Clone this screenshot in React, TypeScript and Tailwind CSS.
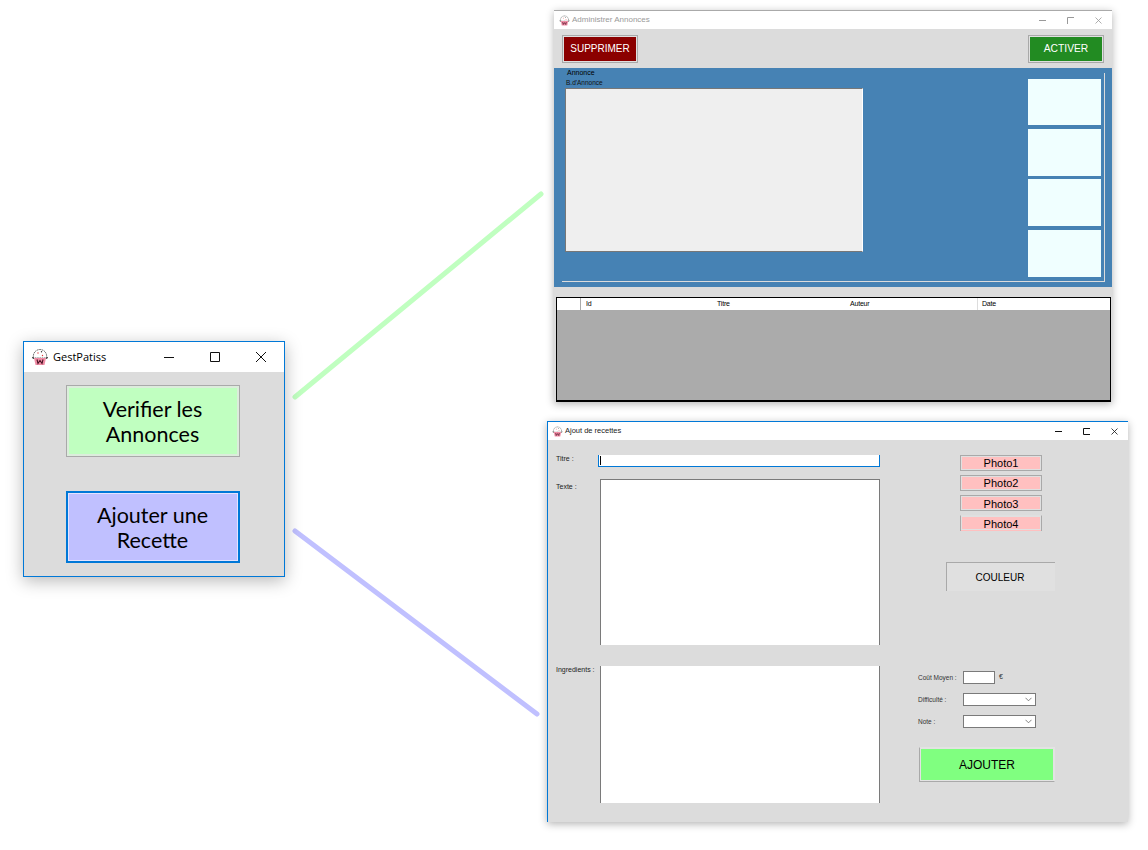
import type { ReactNode } from "react";

const SANS = "font-['Liberation_Sans',sans-serif]";

function Cupcake({ size }: { size: number }) {
  return (
    <svg width={size} height={size} viewBox="0 0 18 18" className="shrink-0">
      <path d="M2.5 10 C1.5 5 5 1.5 9 1.5 C13 1.5 16.5 5 15.5 10 Z" fill="#fff" stroke="#444" strokeWidth="0.8" strokeDasharray="1.6 0.7" />
      <path d="M1 9.5 L3 10.5 M17 9.5 L15 10.5" stroke="#222" strokeWidth="1" />
      <path d="M3 10 H15 L13.5 17 H4.5 Z" fill="#f08ca5" />
      <path d="M6 11.5 L7 15.5 L9 12.5 L11 15.5 L12 11.5" fill="none" stroke="#4a1525" strokeWidth="1.1" />
      <circle cx="7" cy="5" r="0.7" fill="#d33" />
      <circle cx="10.5" cy="3.8" r="0.7" fill="#333" />
      <circle cx="11.5" cy="7.5" r="0.7" fill="#d33" />
    </svg>
  );
}

function TitleBar({
  title,
  iconSize,
  className,
  textClass,
  controls,
}: {
  title: string;
  iconSize: number;
  className: string;
  textClass: string;
  controls: ReactNode;
}) {
  return (
    <div className={`flex items-center bg-white ${className}`}>
      <Cupcake size={iconSize} />
      <span className={`whitespace-nowrap ${textClass}`}>{title}</span>
      <div className="flex-1" />
      {controls}
    </div>
  );
}

function BigControls() {
  return (
    <div className="flex h-full items-center">
      <div className="flex w-[46px] justify-center">
        <svg width="12" height="12" viewBox="0 0 12 12">
          <path d="M1 6.5 H11" stroke="#111" strokeWidth="1" />
        </svg>
      </div>
      <div className="flex w-[46px] justify-center">
        <svg width="12" height="12" viewBox="0 0 12 12" fill="none">
          <path d="M1.5 1.5 H10.5 V10.5 H1.5 Z" stroke="#111" strokeWidth="1" />
        </svg>
      </div>
      <div className="flex w-[46px] justify-center">
        <svg width="12" height="12" viewBox="0 0 12 12">
          <path d="M1 1 L11 11 M11 1 L1 11" stroke="#111" strokeWidth="1" />
        </svg>
      </div>
    </div>
  );
}

// les petites fenetres sont reduites, le bouton agrandir y perd des cotes
function SmallControls({ color, maxPath }: { color: string; maxPath: string }) {
  return (
    <div className="flex h-full items-center">
      <div className="flex w-[28px] justify-center">
        <svg width="7" height="7" viewBox="0 0 7 7">
          <path d="M0 3.5 H7" stroke={color} strokeWidth="1" />
        </svg>
      </div>
      <div className="flex w-[28px] justify-center">
        <svg width="7" height="7" viewBox="0 0 7 7" fill="none">
          <path d={maxPath} stroke={color} strokeWidth="1" />
        </svg>
      </div>
      <div className="flex w-[28px] justify-center">
        <svg width="7" height="7" viewBox="0 0 7 7">
          <path d="M0.5 0.5 L6.5 6.5 M6.5 0.5 L0.5 6.5" stroke={color} strokeWidth="0.8" />
        </svg>
      </div>
    </div>
  );
}

function PhotoButton({ label, textClass, open }: { label: string; textClass: string; open?: boolean }) {
  return (
    <div
      className={`flex h-4 w-[82px] items-center justify-center border border-[#a9a9a9] bg-[#ffc0c0] text-[11px] text-black outline outline-1 -outline-offset-2 outline-[#e0e0e0] ${SANS} ${textClass} ${open ? "border-t-[#dfdfdf] border-b-0" : ""}`}
    >
      {label}
    </div>
  );
}

function FormRow({ label, children }: { label: string; children: ReactNode }) {
  return (
    <div className="flex items-center">
      <span className={`w-[46px] whitespace-nowrap pl-[1px] text-[6.5px] text-[#333] ${SANS}`}>{label}</span>
      {children}
    </div>
  );
}

function SelectBox() {
  return (
    <div className="flex h-[13px] w-[73px] items-center justify-end border border-[#7a7a7a] bg-white pr-[3px]">
      <svg width="7" height="5" viewBox="0 0 7 5" fill="none">
        <path d="M0.5 0.8 L3.5 3.8 L6.5 0.8" stroke="#666" strokeWidth="0.8" />
      </svg>
    </div>
  );
}

export default function App() {
  return (
    <div className="relative h-[850px] w-[1148px] overflow-hidden bg-white">
      {/* connecteurs */}
      <svg className="absolute left-0 top-0" width="1148" height="850">
        <path d="M295 397 L541 194" stroke="#c0ffc0" strokeWidth="5" strokeLinecap="round" />
        <path d="M295 531 L537 714" stroke="#c0c0ff" strokeWidth="5" strokeLinecap="round" />
      </svg>

      {/* menu principal */}
      <div className="absolute left-[23px] top-[341px] flex h-[236px] w-[262px] flex-col border border-[#0078d7] bg-[#dcdcdc] shadow-[0_4px_16px_rgba(0,0,0,0.28)]">
        <TitleBar
          title="GestPatiss"
          iconSize={18}
          className="h-[30px] shrink-0 pl-[7px]"
          textClass="ml-[4px] text-[11px] text-black font-['Open_Sans',sans-serif]"
          controls={<BigControls />}
        />
        <div className="flex flex-col items-center pr-[3px] pt-[13px]">
          <div className="flex h-[72px] w-[174px] items-center justify-center border border-[#a9a9a9] bg-[#c0ffc0] pt-[2px] text-center text-[21.5px] leading-[25px] text-black outline outline-2 -outline-offset-3 outline-[#dcecdc] font-['Lato',sans-serif]">
            Verifier les
            <br />
            Annonces
          </div>
          <div className="mt-[34px] flex h-[72px] w-[174px] items-center justify-center border-2 border-[#0078d7] bg-[#c0c0ff] pt-[2px] text-center text-[21.5px] leading-[25px] text-black outline outline-1 -outline-offset-3 outline-[#e4e4ff] font-['Lato',sans-serif]">
            Ajouter une
            <br />
            Recette
          </div>
        </div>
      </div>

      {/* administrer annonces */}
      <div className="absolute left-[554px] top-[10px] flex h-[392px] w-[558px] flex-col border-t border-[#aaaaaa] bg-[#dcdcdc] shadow-[0_2px_8px_rgba(0,0,0,0.3)]">
        <TitleBar
          title="Administrer Annonces"
          iconSize={11}
          className="h-[18px] shrink-0 pl-[5px]"
          textClass={`ml-[2px] text-[8px] text-[#9a9a9a] ${SANS}`}
          controls={<SmallControls color="#999" maxPath="M0.5 7 V0.5 H7" />}
        />
        <div className="flex h-[39px] shrink-0 items-center justify-between px-[8px]">
          <div className={`flex h-[28px] w-[76px] items-center justify-center border border-[#a9a9a9] bg-[#8b0000] text-[10px] text-white outline outline-1 -outline-offset-2 outline-[#e0e0e0] ${SANS}`}>
            SUPPRIMER
          </div>
          <div className={`flex h-[28px] w-[76px] items-center justify-center border border-[#a9a9a9] bg-[#228b22] text-[10.3px] text-white outline outline-1 -outline-offset-2 outline-[#e0e0e0] ${SANS}`}>
            ACTIVER
          </div>
        </div>
        <div className="h-[219px] shrink-0 bg-[#4682b4] pl-[8px] pr-[7px] pt-[5px]">
          <div className="flex h-[209px] border-b border-r border-[#dcdcdc] pl-[3px] pr-[3px]">
            <div className="flex w-[298px] flex-col">
              <span className={`mt-[-5px] h-[10px] pl-[2px] text-[7px] leading-[10px] text-black ${SANS}`}>Annonce</span>
              <span className={`h-[10px] pl-[1px] text-[6.5px] leading-[10px] text-[#111] ${SANS}`}>B.d'Annonce</span>
              <div className="h-[164px] border border-[#777] border-r-white bg-[#efefef]" />
            </div>
            <div className="flex-1" />
            <div className="flex w-[73px] flex-col pt-[6px]">
              <div className="h-[46px] bg-[#f0ffff]" />
              <div className="mt-[4px] h-[47px] bg-[#f0ffff]" />
              <div className="mt-[3px] h-[47px] bg-[#f0ffff]" />
              <div className="mt-[4px] h-[47px] bg-[#f0ffff]" />
            </div>
          </div>
        </div>
        <div className="ml-[2px] mr-[1px] mt-[10px] flex flex-1 flex-col border border-b-2 border-black bg-[#ababab]">
          <div className={`grid h-[12px] grid-cols-[24px_131px_133px_133px_1fr] bg-white text-[7px] leading-[12px] tracking-[-0.2px] text-black ${SANS}`}>
            <div className="border-r border-[#aaa]" />
            <div className="pl-[5px]">Id</div>
            <div className="pl-[5px]">Titre</div>
            <div className="border-r border-[#ddd] pl-[5px]">Auteur</div>
            <div className="pl-[4px]">Date</div>
          </div>
        </div>
      </div>

      {/* ajout de recettes */}
      <div className="absolute left-[547px] top-[421px] flex h-[401px] w-[581px] flex-col border-l border-t border-[#0078d7] bg-[#dcdcdc] shadow-[0_2px_8px_rgba(0,0,0,0.3)]">
        <TitleBar
          title="Ajout de recettes"
          iconSize={11}
          className="h-[18px] shrink-0 pl-[4px]"
          textClass={`ml-[2px] text-[7.5px] text-[#222] ${SANS}`}
          controls={<SmallControls color="#111" maxPath="M7 0.5 H0.5 V6.5 H7" />}
        />
        <div className="flex flex-1">
          <div className={`w-[52px] shrink-0 text-[7px] text-[#222] ${SANS}`}>
            <div className="ml-[8px] mt-[14px]">Titre :</div>
            <div className="ml-[8px] mt-[17px]">Texte :</div>
            <div className="ml-[8px] mt-[173px] whitespace-nowrap">Ingredients :</div>
          </div>
          <div className="w-[280px] shrink-0">
            <div className="ml-[-2px] mt-[15px] flex h-[12px] w-[282px] items-center border border-t-0 border-[#0078d7] bg-white pl-[1px]">
              <div className="h-[9px] w-px bg-black" />
            </div>
            <div className="mt-[12px] h-[166px] border border-b-0 border-[#7a7a7a] bg-white" />
            <div className="mt-[21px] h-[137px] border-x border-[#7a7a7a] bg-white" />
          </div>
          <div className="w-[248px] shrink-0">
            <div className="ml-[80px] mt-[15px] flex flex-col gap-[4px]">
              <PhotoButton label="Photo1" textClass="" />
              <PhotoButton label="Photo2" textClass="pt-[1px]" />
              <PhotoButton label="Photo3" textClass="pt-[3px]" />
              <PhotoButton label="Photo4" textClass="pt-[1px]" open />
            </div>
            <div className={`ml-[66px] mt-[31px] flex h-[29px] w-[109px] items-center justify-center border-l border-t border-[#a9a9a9] bg-[#e0e0e0] pr-[2px] text-[10px] text-black ${SANS}`}>
              COULEUR
            </div>
            <div className="ml-[37px] mt-[80px] flex flex-col gap-[9px]">
              <FormRow label="Coût Moyen :">
                <div className="h-[13px] w-[32px] border border-[#7a7a7a] bg-white" />
                <span className={`ml-[4px] text-[7px] text-[#333] ${SANS}`}>€</span>
              </FormRow>
              <FormRow label="Difficulté :">
                <SelectBox />
              </FormRow>
              <FormRow label="Note :">
                <SelectBox />
              </FormRow>
            </div>
            <div className={`ml-[39px] mt-[19px] flex h-[35px] w-[136px] items-center justify-center border border-[#a9a9a9] border-r-[#e3e3e3] border-t-[#e3e3e3] bg-[#80ff80] text-[12px] text-black outline outline-1 -outline-offset-2 outline-[#e3e3e3] ${SANS}`}>
              AJOUTER
            </div>
          </div>
        </div>
      </div>
    </div>
  );
}
